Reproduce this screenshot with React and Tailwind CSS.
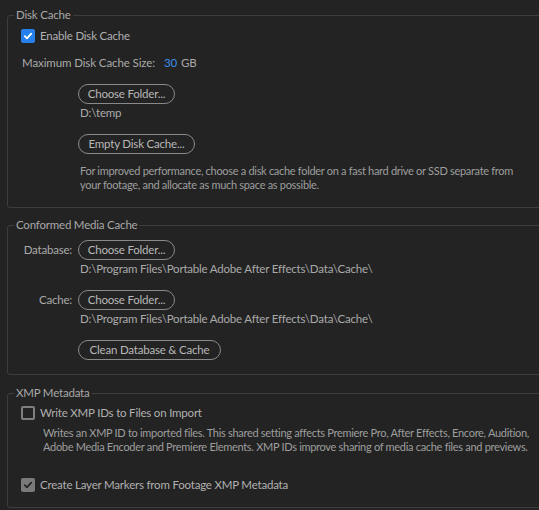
import React from "react";

const font = { fontFamily: "Lato, 'Noto Sans', sans-serif" };

function Check({ state }) {
  if (state === "blue") {
    return (
      <span className="flex h-[14px] w-[14px] items-center justify-center rounded-[2px] bg-[#2680eb]">
        <svg width="10" height="10" viewBox="0 0 10 10">
          <path d="M1.8 5.2 L4 7.4 L8.2 2.6" fill="none" stroke="#ffffff" strokeWidth="1.8" strokeLinecap="round" strokeLinejoin="round" />
        </svg>
      </span>
    );
  }
  if (state === "gray") {
    return (
      <span className="flex h-[14px] w-[14px] items-center justify-center rounded-[2px] bg-[#7a7a7a]">
        <svg width="10" height="10" viewBox="0 0 10 10">
          <path d="M1.8 5.2 L4 7.4 L8.2 2.6" fill="none" stroke="#262626" strokeWidth="1.8" strokeLinecap="round" strokeLinejoin="round" />
        </svg>
      </span>
    );
  }
  return <span className="block h-[14px] w-[14px] rounded-[2px] border-2 border-[#7f7f7f]" />;
}

function Btn({ w, children }) {
  return (
    <div
      className={`flex h-[20px] items-center justify-center rounded-full border border-[#8a8a8a] text-[11.5px] leading-none text-[#b8b8b8] ${w}`}
    >
      {children}
    </div>
  );
}

function Group({ title, className, children }) {
  return (
    <fieldset className={`ml-[7px] w-[545px] rounded-[3px] border border-[#3d3d3d] ${className}`}>
      <legend className="ml-[6px] px-[2px] text-[11.5px] leading-[16px] text-[#a8a8a8]">{title}</legend>
      <div className="pl-[14px]">{children}</div>
    </fieldset>
  );
}

export default function App() {
  return (
    <div
      className="h-[510px] w-[539px] overflow-hidden bg-[#232323] pt-[7px] text-[11.5px] tracking-[-0.2px] text-[#aaaaaa]"
      style={font}
    >
      <Group title="Disk Cache" className="pb-[15px]">
        <div className="-ml-px mt-[6px] flex h-[14px] items-center gap-[5px]">
          <Check state="blue" />
          <span className="leading-[16px] text-[#b0b0b0]">Enable Disk Cache</span>
        </div>
        <div className="mt-[12px] flex h-[16px] items-center leading-[16px]">
          <span className="tracking-[-0.1px]">Maximum Disk Cache Size:</span>
          <span className="ml-[9px] text-[#3b8fe6]">30</span>
          <span className="ml-[4px]">GB</span>
        </div>
        <div className="ml-[56px] mt-[13px]">
          <Btn w="w-[97px]">Choose Folder...</Btn>
        </div>
        <div className="ml-[58px] mt-[1px] leading-[16px]">D:\temp</div>
        <div className="ml-[56px] mt-[13px]">
          <Btn w="w-[117px]">Empty Disk Cache...</Btn>
        </div>
        <p className="ml-[58px] mt-[10px] w-[470px] whitespace-nowrap text-[11px] leading-[14px] tracking-[-0.3px] text-[#9e9e9e]">
          For improved performance, choose a disk cache folder on a fast hard drive or SSD separate from
          <br />
          your footage, and allocate as much space as possible.
        </p>
      </Group>

      <Group title="Conformed Media Cache" className="mt-[9px] pb-[14px]">
        <div className="mt-[7px] flex items-center">
          <span className="w-[56px] pr-[6px] text-right leading-[16px]">Database:</span>
          <Btn w="w-[97px]">Choose Folder...</Btn>
        </div>
        <div className="ml-[58px] mt-[1px] leading-[16px]">
          D:\Program Files\Portable Adobe After Effects\Data\Cache\
        </div>
        <div className="mt-[13px] flex items-center">
          <span className="w-[56px] pr-[6px] text-right leading-[16px]">Cache:</span>
          <Btn w="w-[97px]">Choose Folder...</Btn>
        </div>
        <div className="ml-[58px] mt-[1px] leading-[16px]">
          D:\Program Files\Portable Adobe After Effects\Data\Cache\
        </div>
        <div className="ml-[56px] mt-[13px]">
          <Btn w="w-[143px]">Clean Database &amp; Cache</Btn>
        </div>
      </Group>

      <Group title="XMP Metadata" className="mt-[10px] pb-[15px]">
        <div className="-ml-px mt-[5px] flex h-[14px] items-center gap-[5px]">
          <Check state="off" />
          <span className="leading-[16px] text-[#b0b0b0]">Write XMP IDs to Files on Import</span>
        </div>
        <p className="ml-[21px] mt-[6px] w-[500px] whitespace-nowrap text-[11px] leading-[14px] tracking-[-0.3px] text-[#9e9e9e]">
          Writes an XMP ID to imported files. This shared setting affects Premiere Pro, After Effects, Encore, Audition,
          <br />
          Adobe Media Encoder and Premiere Elements. XMP IDs improve sharing of media cache files and previews.
        </p>
        <div className="-ml-px mt-[24px] flex h-[14px] items-center gap-[5px]">
          <Check state="gray" />
          <span className="leading-[16px] text-[#b0b0b0]">Create Layer Markers from Footage XMP Metadata</span>
        </div>
      </Group>
    </div>
  );
}
